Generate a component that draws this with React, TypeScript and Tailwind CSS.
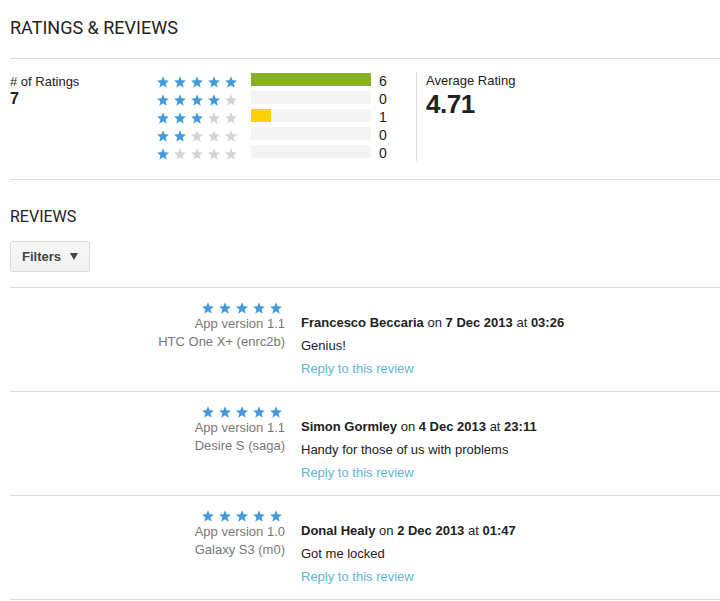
const BLUE = '#4299db'
const GREY = '#d4d4d4'

const ratingRows = [
  { stars: 5, count: 6, width: 120, color: 'bg-[#87b123]' },
  { stars: 4, count: 0, width: 0, color: 'bg-[#87b123]' },
  { stars: 3, count: 1, width: 20, color: 'bg-[#ffd200]' },
  { stars: 2, count: 0, width: 0, color: 'bg-[#87b123]' },
  { stars: 1, count: 0, width: 0, color: 'bg-[#87b123]' },
]

const reviews = [
  {
    version: '1.1',
    device: 'HTC One X+ (enrc2b)',
    author: 'Francesco Beccaria',
    date: '7 Dec 2013',
    time: '03:26',
    text: 'Genius!',
  },
  {
    version: '1.1',
    device: 'Desire S (saga)',
    author: 'Simon Gormley',
    date: '4 Dec 2013',
    time: '23:11',
    text: 'Handy for those of us with problems',
  },
  {
    version: '1.0',
    device: 'Galaxy S3 (m0)',
    author: 'Donal Healy',
    date: '2 Dec 2013',
    time: '01:47',
    text: 'Got me locked',
  },
]

function Star({ filled }: { filled: boolean }) {
  return (
    <svg width="12" height="12" viewBox="0 0 12 12" className="block shrink-0">
      <polygon
        points="6,0.3 7.6,4.3 11.9,4.6 8.6,7.4 9.7,11.7 6,9.3 2.3,11.7 3.4,7.4 0.1,4.6 4.4,4.3"
        fill={filled ? BLUE : GREY}
      />
    </svg>
  )
}

function Stars({ count }: { count: number }) {
  return (
    <div className="flex gap-[5px]">
      {[1, 2, 3, 4, 5].map(i => (
        <Star key={i} filled={i <= count} />
      ))}
    </div>
  )
}

export default function App() {
  return (
    <div className="w-[720px] bg-white pl-[10px] font-['Liberation_Sans',Arial,sans-serif] text-[13px] text-[#222]">
      <h1 className="pt-[16px] pb-[18px] font-['Roboto',sans-serif] text-[18px] leading-[24px] font-normal text-[#222]">
        RATINGS &amp; REVIEWS
      </h1>

      <section className="border-t border-b border-[#dddddd] pt-[13px] pb-[18px]">
        <div className="flex h-[89px]">
          <div className="w-[147px] pt-[2px]">
            <p className="leading-[16px]">
              # of Ratings
            </p>
            <p className="text-[16px] leading-[18px] font-bold">7</p>
          </div>

          <div className="flex flex-col gap-[5px] pt-[1px]">
            {ratingRows.map(row => (
              <div key={row.stars} className="flex h-[13px] items-start">
                <div className="mt-[3px]">
                  <Stars count={row.stars} />
                </div>
                <div className="ml-[14px] h-[13px] w-[120px] bg-[#f4f4f4]">
                  <div className={`h-full ${row.color}`} style={{ width: row.width }} />
                </div>
                <span className="ml-[8px] mt-[2px] w-[37px] text-[14px] leading-[13px]">{row.count}</span>
              </div>
            ))}
          </div>

          <div className="border-l border-[#dddddd] pl-[9px] pt-[1px]">
            <p className="leading-[16px]">Average Rating</p>
            <p className="text-[26px] leading-[30px] font-bold tracking-[-0.5px]">4.71</p>
          </div>
        </div>
      </section>

      <h2 className="pt-[27px] font-['Roboto',sans-serif] text-[16px] leading-[20px] font-normal text-[#222]">
        REVIEWS
      </h2>

      <button
        type="button"
        className="mt-[14px] flex h-[31px] w-[80px] items-center rounded-[2px] border border-[#dcdcdc] bg-gradient-to-b from-[#f8f8f8] to-[#f1f1f1] pl-[11px] text-[13px] font-bold text-[#444]"
      >
        Filters
        <svg width="8" height="7" viewBox="0 0 8 7" className="ml-[9px]">
          <polygon points="0,0 8,0 4,7" fill="#444" />
        </svg>
      </button>

      <div className="mt-[15px] border-t border-[#dddddd]">
        {reviews.map(review => (
          <div key={review.author} className="flex border-b border-[#dddddd]">
            <div className="flex w-[275px] flex-col items-end pt-[14px] text-[#777]">
              <div className="h-[13px] pr-[3px]">
                <Stars count={5} />
              </div>
              <p className="leading-[18px]">App version {review.version}</p>
              <p className="leading-[18px]">{review.device}</p>
            </div>
            <div className="ml-[16px] flex flex-col gap-[5px] pt-[26px] pb-[13px] leading-[18px]">
              <p>
                <span className="font-bold">{review.author}</span> on{' '}
                <span className="font-bold">{review.date}</span> at{' '}
                <span className="font-bold">{review.time}</span>
              </p>
              <p>{review.text}</p>
              <a className="text-[#5cb7d3]">Reply to this review</a>
            </div>
          </div>
        ))}
      </div>
    </div>
  )
}
